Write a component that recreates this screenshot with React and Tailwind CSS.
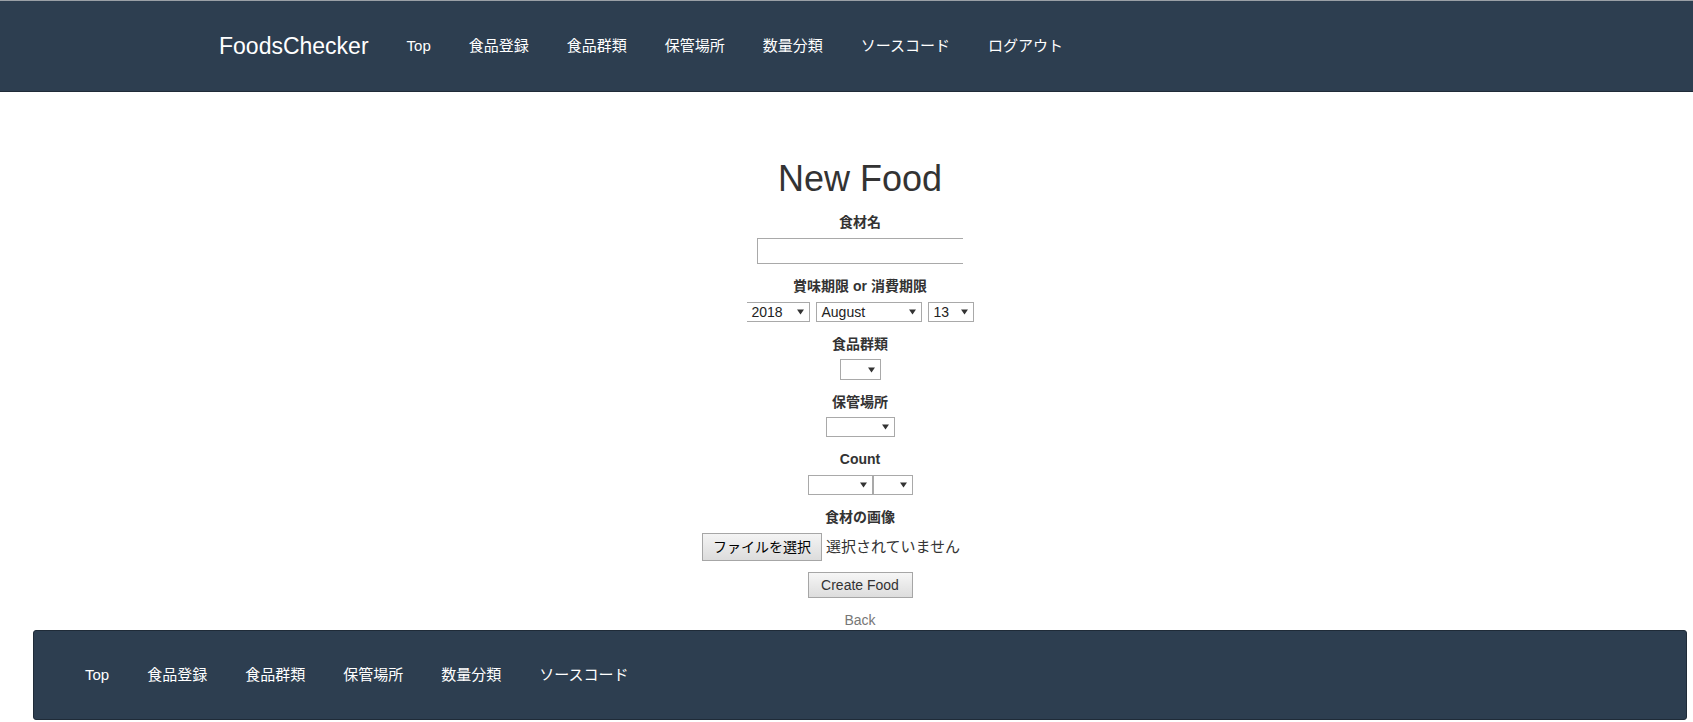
import React from 'react';

const NAV = ['Top', '食品登録', '食品群類', '保管場所', '数量分類', 'ソースコード', 'ログアウト'];
const FOOT = ['Top', '食品登録', '食品群類', '保管場所', '数量分類', 'ソースコード'];

const font = "font-['Liberation_Sans','Noto_Sans_CJK_JP',sans-serif]";

// small select-like box with the arrow on the right
const Select = ({ value = '', className = '' }) => (
  <div
    className={`flex h-[20px] items-center justify-between border border-[#a9a9a9] bg-white pl-[5px] pr-[5px] text-[14px] text-[#222] ${className}`}
  >
    <span className="leading-none">{value}</span>
    <svg width="7" height="6" viewBox="0 0 7 6" className="ml-1 shrink-0">
      <path d="M0 0.5 H7 L3.5 5.5 Z" fill="#333" />
    </svg>
  </div>
);

const Label = ({ children, className = '' }) => (
  <div className={`h-[20px] text-[14px] font-bold leading-[20px] text-[#333] ${className}`}>{children}</div>
);

export default function App() {
  return (
    <div className={`min-h-[722px] bg-white ${font}`}>
      {/* header */}
      <header className="h-[92px] border-t border-t-[#9aa0a6] border-b border-b-[#1f2b38] bg-[#2d3e50]">
        <div className="flex h-full items-center pl-[219px]">
          <span className="mr-[38px] text-[23px] text-white">FoodsChecker</span>
          <nav className="flex items-center gap-[38px] text-[15px] text-white">
            {NAV.map((n) => (
              <span key={n}>{n}</span>
            ))}
          </nav>
        </div>
      </header>

      {/* main form */}
      <main className="flex flex-col items-center pl-[27px] pt-[67px] text-[#333]">
        <h1 className="h-[40px] text-[36px] leading-[40px] text-[#333]">New Food</h1>

        <Label className="mt-[13px]">食材名</Label>
        <div className="mt-[6px] h-[26px] w-[206px] border border-r-0 border-[#a9a9a9] bg-white" />

        <Label className="mt-[12px]">賞味期限 or 消費期限</Label>
        <div className="mt-[6px] flex gap-[6px]">
          <Select value="2018" className="w-[63px] border-l-0" />
          <Select value="August" className="w-[106px]" />
          <Select value="13" className="w-[46px]" />
        </div>

        <Label className="mt-[12px]">食品群類</Label>
        <Select className="mt-[5px] h-[21px] w-[41px]" />

        <Label className="mt-[12px]">保管場所</Label>
        <Select className="mt-[5px] w-[69px]" />

        <Label className="mt-[12px]">Count</Label>
        <div className="mt-[6px] flex">
          <Select className="w-[65px]" />
          <Select className="w-[40px]" />
        </div>

        <Label className="mt-[12px]">食材の画像</Label>
        <div className="mt-[6px] flex w-[316px] items-center text-[14px]">
          <button className="h-[28px] w-[120px] border border-[#a6a6a6] bg-gradient-to-b from-[#f4f4f4] to-[#dcdcdc] text-[14px] text-black">
            ファイルを選択
          </button>
          <span className="ml-[4px] text-[15px] text-[#333]">選択されていません</span>
        </div>

        <button className="mt-[11px] h-[26px] w-[105px] border border-[#a6a6a6] bg-gradient-to-b from-[#f6f6f6] to-[#dddddd] text-[14px] text-[#333]">
          Create Food
        </button>

        <a className="mt-[12px] h-[20px] text-[14px] leading-[20px] text-[#777]">Back</a>
      </main>

      {/* bottom navbar over the page */}
      <footer className="fixed bottom-[2px] left-[33px] right-[6px] flex h-[90px] items-center rounded-[3px] border border-[#1f2b38] bg-[#2d3e50] pl-[51px]">
        <nav className="flex items-center gap-[38px] text-[15px] text-white">
          {FOOT.map((n) => (
            <span key={n}>{n}</span>
          ))}
        </nav>
      </footer>
    </div>
  );
}
